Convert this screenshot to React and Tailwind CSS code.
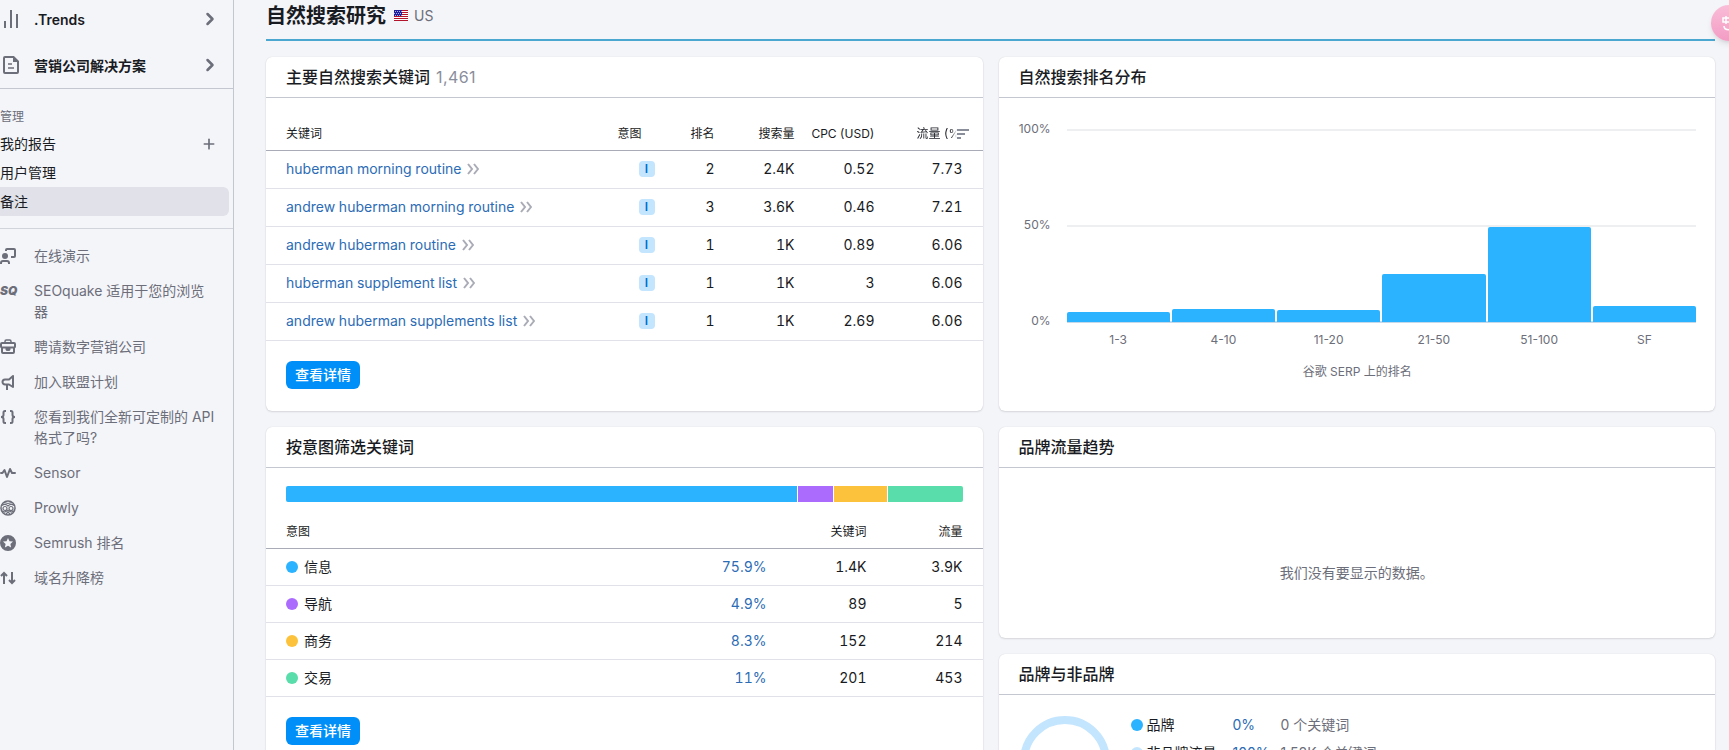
import React from "react";
import { ChevronRight, Plus } from "lucide-react";

const KEYWORDS = [
  { keyword: "huberman morning routine", rank: 2, volume: "2.4K", cpc: "0.52", traffic: "7.73" },
  { keyword: "andrew huberman morning routine", rank: 3, volume: "3.6K", cpc: "0.46", traffic: "7.21" },
  { keyword: "andrew huberman routine", rank: 1, volume: "1K", cpc: "0.89", traffic: "6.06" },
  { keyword: "huberman supplement list", rank: 1, volume: "1K", cpc: "3", traffic: "6.06" },
  { keyword: "andrew huberman supplements list", rank: 1, volume: "1K", cpc: "2.69", traffic: "6.06" },
];

const POSITIONS = [
  { range: "1-3", percent: 5 },
  { range: "4-10", percent: 6.7 },
  { range: "11-20", percent: 6.2 },
  { range: "21-50", percent: 25 },
  { range: "51-100", percent: 49.2 },
  { range: "SF", percent: 8.2 },
];

const INTENTS = [
  { name: "信息", percent: "75.9%", share: 76, keywords: "1.4K", traffic: "3.9K", color: "bg-[#2bb3ff]" },
  { name: "导航", percent: "4.9%", share: 5.1, keywords: "89", traffic: "5", color: "bg-[#ab6cfe]" },
  { name: "商务", percent: "8.3%", share: 7.9, keywords: "152", traffic: "214", color: "bg-[#fdc23c]" },
  { name: "交易", percent: "11%", share: 11.1, keywords: "201", traffic: "453", color: "bg-[#59ddaa]" },
];

const BRANDS = [
  { name: "品牌", percent: "0%", keywords: "0 个关键词", color: "bg-[#2bb3ff]" },
  { name: "非品牌流量", percent: "100%", keywords: "1.58K 个关键词", color: "bg-[#c4e5fe]" },
];

function Icon({ children }) {
  return (
    <svg
      viewBox="0 0 16 16"
      className="w-4 h-4 shrink-0"
      fill="none"
      stroke="currentColor"
      strokeWidth="2"
      aria-hidden="true"
    >
      {children}
    </svg>
  );
}

const LINKS = [
  {
    label: "在线演示",
    icon: (
      <Icon>
        <circle cx="5" cy="8" r="3" fill="currentColor" stroke="none" />
        <path d="M1 16v-1c0-1.200.8-2 2-2h4c1.200 0 2 .8 2 2v1" />
        <path d="M6 3V2c0-.6.4-1 1-1h7c.6 0 1 .4 1 1v6c0 .6-.4 1-1 1h-3" />
      </Icon>
    ),
  },
  {
    label: "SEOquake 适用于您的浏览器",
    icon: (
      <span className="w-4 shrink-0 text-xs leading-4 font-black italic" aria-hidden="true">
        SQ
      </span>
    ),
  },
  {
    label: "聘请数字营销公司",
    icon: (
      <Icon>
        <path d="M5 4V2.500C5 1.700 5.500 1 6.300 1h3.400c.8 0 1.300.7 1.300 1.500V4" strokeWidth="1.500" />
        <rect x="1" y="4" width="14" height="4.500" rx="1" />
        <path d="M2 8.500V13c0 .6.4 1 1 1h10c.6 0 1-.4 1-1V8.500" />
        <path d="M5.500 9h5v1.500a2.500 1.500 0 0 1-5 0z" fill="currentColor" stroke="none" />
      </Icon>
    ),
  },
  {
    label: "加入联盟计划",
    icon: (
      <Icon>
        <path d="M13 2v11L9 10.500H5a2.500 2.500 0 0 1 0-5h4z" strokeLinejoin="round" />
        <path d="M7 10.500V16" />
      </Icon>
    ),
  },
  {
    label: "您看到我们全新可定制的 API 格式了吗?",
    icon: (
      <Icon>
        <path d="M6 2H5C3.900 2 3.500 2.700 3.500 3.500V6c0 1-.8 2-2.500 2 1.700 0 2.500 1 2.500 2v2.500c0 .8.4 1.500 1.500 1.500h1" />
        <path d="M10 2h1c1.100 0 1.500.7 1.500 1.500V6c0 1 .8 2 2.500 2-1.700 0-2.500 1-2.500 2v2.500c0 .8-.4 1.500-1.500 1.500h-1" />
      </Icon>
    ),
  },
  {
    label: "Sensor",
    icon: (
      <Icon>
        <path d="M1 8h1.500L4.500 5 7 12l3-8 2 4h3" strokeLinecap="round" strokeLinejoin="round" />
      </Icon>
    ),
  },
  {
    label: "Prowly",
    icon: (
      <Icon>
        <circle cx="8" cy="8" r="7" strokeWidth="1.500" />
        <path d="M2 5.500C4.500 3.500 6 4 8 6c2-2 3.500-2.500 6-.5M4 2.500l4 1 4-1" strokeWidth="1.200" />
        <circle cx="5" cy="8.500" r="2" strokeWidth="1.200" />
        <circle cx="11" cy="8.500" r="2" strokeWidth="1.200" />
        <path d="M2 11l2.500 1L8 10.500l3.500 1.500 2.500-1M6 14l2-2 2 2" strokeWidth="1.200" />
      </Icon>
    ),
  },
  {
    label: "Semrush 排名",
    icon: (
      <Icon>
        <path
          fill="currentColor"
          stroke="none"
          fillRule="evenodd"
          d="M8 0a8 8 0 1 0 0 16A8 8 0 0 0 8 0zm0 3l1.500 3.200 3.500.4-2.600 2.400.7 3.500L8 10.800l-3.100 1.700.7-3.500L3 6.600l3.500-.4z"
        />
      </Icon>
    ),
  },
  {
    label: "域名升降榜",
    icon: (
      <Icon>
        <path d="M4 14V3M1 6l3-3 3 3M12 2v11M9 10l3 3 3-3" />
      </Icon>
    ),
  },
];

function Sidebar() {
  return (
    <aside className="w-[234px] shrink-0 border-r border-[#c4c7cf] text-sm leading-[21px] text-[#191b23]">
      <nav>
        <a href="#trends" className="flex items-center h-[38px] pl-[3px] pr-[13px] font-semibold">
          <svg viewBox="0 0 16 18" className="w-4 h-[18px] mr-[15px] text-[#6c6e79]" fill="currentColor" aria-hidden="true">
            <path d="M1 11h2v7H1zM7 0h2v18H7zM13 4h2v14h-2z" />
          </svg>
          <span className="flex-1">.Trends</span>
          <ChevronRight className="w-5 h-5 text-[#6c6e79]" strokeWidth={3} />
        </a>
        <a href="#agency" className="flex items-center h-[51px] pl-[3px] pr-[13px] pt-1 font-semibold border-b border-[#c4c7cf]">
          <svg viewBox="0 0 16 18" className="w-4 h-[18px] mr-[15px] text-[#6c6e79]" fill="none" stroke="currentColor" strokeWidth="2" aria-hidden="true">
            <path d="M2 1h8.500L15 5.500V16c0 .6-.4 1-1 1H2c-.6 0-1-.4-1-1V2c0-.6.4-1 1-1z" />
            <path d="M10 1v5h5z" fill="currentColor" stroke="none" />
            <path d="M5 8h4M5 12h6" strokeWidth="1.500" />
          </svg>
          <span className="flex-1">营销公司解决方案</span>
          <ChevronRight className="w-5 h-5 text-[#6c6e79]" strokeWidth={3} />
        </a>
      </nav>
      <nav className="pt-4 pb-3 border-b border-[#d1d4db]">
        <div className="h-6 text-xs leading-6 text-[#6c6e79]">管理</div>
        <div className="flex items-center justify-between h-[29px] pr-4">
          <a href="#reports">我的报告</a>
          <button type="button" aria-label="新建报告" className="text-[#6c6e79]">
            <Plus className="w-4 h-4" strokeWidth={2.5} />
          </button>
        </div>
        <a href="#users" className="flex items-center h-[29px]">
          用户管理
        </a>
        <a href="#notes" className="flex items-center h-[29px] mr-1 rounded-r-md bg-[#e0e1e9]">
          备注
        </a>
      </nav>
      <nav className="flex flex-col gap-3.5 pt-4 text-[#6c6e79]">
        {LINKS.map((link) => (
          <a key={link.label} href="#tools" className="flex gap-[18px] pr-4">
            <span className="flex items-center h-[21px] w-4 shrink-0">{link.icon}</span>
            <span>{link.label}</span>
          </a>
        ))}
      </nav>
    </aside>
  );
}

function Card({ title, count, className = "", children }) {
  return (
    <section
      className={`rounded-md bg-white shadow-[0_0_1px_0_rgba(25,27,35,0.16),0_1px_2px_0_rgba(25,27,35,0.12)] ${className}`}
    >
      <h2 className="h-[41px] px-5 border-b border-[#c4c7cf] text-base leading-10 font-medium text-[#191b23]">
        {title}
        {count && <span className="ml-1.5 font-normal tracking-wide text-[#8a8e9b]">{count}</span>}
      </h2>
      {children}
    </section>
  );
}

function DetailsButton() {
  return (
    <button type="button" className="block h-7 mt-5 ml-5 px-2 rounded-md bg-[#008ff8] text-sm font-medium text-white">
      <span className="px-px">查看详情</span>
    </button>
  );
}

function KeywordsTable() {
  return (
    <table className="w-full table-fixed text-right tabular-nums">
      <colgroup>
        <col />
        <col className="w-[37px]" />
        <col className="w-[60px]" />
        <col className="w-20" />
        <col className="w-20" />
        <col className="w-[108px]" />
      </colgroup>
      <thead className="text-xs">
        <tr className="h-[52px] border-b border-[#a9abb6] *:pt-5 *:font-normal">
          <th className="pl-5 text-left">关键词</th>
          <th className="text-left">意图</th>
          <th>排名</th>
          <th>搜索量</th>
          <th>CPC (USD)</th>
          <th className="pr-3.5">
            <button type="button" className="flex items-center ml-auto">
              <span className="w-10 overflow-hidden whitespace-nowrap text-left [mask-image:linear-gradient(to_right,#000_85%,transparent)]">
                流量 (%)
              </span>
              <svg viewBox="0 0 12 10" className="w-3 h-2.5 text-[#8a8e9b]" fill="currentColor" aria-hidden="true">
                <path d="M0 0h12v2H0zM0 4h8v2H0zM0 8h4v2H0z" />
              </svg>
            </button>
          </th>
        </tr>
      </thead>
      <tbody className="text-sm">
        {KEYWORDS.map((row) => (
          <tr key={row.keyword} className="h-[38px] border-b border-[#e0e1e9]">
            <td className="pl-5 text-left text-[#2c6cb5]">
              <a href="#keyword" className="flex items-center gap-1.5 whitespace-nowrap">
                {row.keyword}
                <svg viewBox="0 0 12 12" className="w-3 h-3 text-[#a9abb6]" fill="none" stroke="currentColor" strokeWidth="2" aria-hidden="true">
                  <path d="M1 1l4 5-4 5M7 1l4 5-4 5" />
                </svg>
              </a>
            </td>
            <td>
              <span className="flex items-center justify-center w-4 h-4 ml-auto rounded bg-[#c4e5fe] text-xs font-semibold text-[#006dca]">
                I
              </span>
            </td>
            <td>{row.rank}</td>
            <td>{row.volume}</td>
            <td>{row.cpc}</td>
            <td className="pr-5">{row.traffic}</td>
          </tr>
        ))}
      </tbody>
    </table>
  );
}

function PositionsChart() {
  return (
    <div className="pl-5 pr-[19px] pt-[31px] text-xs text-[#6c6e79]">
      <div className="flex">
        <div className="flex flex-col justify-between w-8 mr-4 -my-2 h-52 text-right leading-4">
          <span>100%</span>
          <span>50%</span>
          <span>0%</span>
        </div>
        <div className="relative flex-1 h-[194px]">
          <div className="flex flex-col justify-between h-full">
            <div className="h-0.5 bg-[#edeff0]" />
            <div className="h-0.5 bg-[#edeff0]" />
            <div className="h-0.5 bg-[#c4d8ea]" />
          </div>
          <div className="absolute inset-x-0 top-0 bottom-px flex items-end gap-0.5">
            {POSITIONS.map((p) => (
              <div key={p.range} className="flex-1 rounded-t-xs bg-[#2bb3ff]" style={{ height: `${p.percent}%` }} />
            ))}
          </div>
        </div>
      </div>
      <div className="flex gap-0.5 ml-12 mt-[7px] text-center leading-5">
        {POSITIONS.map((p) => (
          <span key={p.range} className="flex-1">
            {p.range}
          </span>
        ))}
      </div>
      <div className="mt-3 text-center leading-5">谷歌 SERP 上的排名</div>
    </div>
  );
}

function IntentTable() {
  return (
    <>
      <div className="flex gap-px mx-5 mt-[18px] h-4 rounded-xs overflow-hidden">
        {INTENTS.map((intent) => (
          <div key={intent.name} className={intent.color} style={{ flex: intent.share }} />
        ))}
      </div>
      <table className="w-full table-fixed text-right tabular-nums">
        <colgroup>
          <col />
          <col className="w-[100px]" />
          <col className="w-[100px]" />
          <col className="w-[116px]" />
        </colgroup>
        <thead className="text-xs">
          <tr className="h-[47px] border-b border-[#a9abb6] *:pt-3.5 *:font-normal">
            <th className="pl-5 text-left">意图</th>
            <th aria-label="百分比" />
            <th>关键词</th>
            <th className="pr-5">流量</th>
          </tr>
        </thead>
        <tbody className="text-sm">
          {INTENTS.map((intent) => (
            <tr key={intent.name} className="h-[37px] border-b border-[#e0e1e9]">
              <td className="pl-5">
                <span className="flex items-center gap-1.5">
                  <span className={`w-3 h-3 rounded-full ${intent.color}`} />
                  {intent.name}
                </span>
              </td>
              <td>
                <a href="#intent" className="text-[#2c6cb5]">
                  {intent.percent}
                </a>
              </td>
              <td>{intent.keywords}</td>
              <td className="pr-5">{intent.traffic}</td>
            </tr>
          ))}
        </tbody>
      </table>
    </>
  );
}

function BrandSplit() {
  return (
    <div className="flex gap-5 pl-5 pt-5 text-sm">
      <svg viewBox="0 0 92 92" className="w-[92px] h-[92px]" fill="none" aria-hidden="true">
        <circle cx="46" cy="46" r="41" stroke="#c4e5fe" strokeWidth="8" />
      </svg>
      <table className="self-start">
        <tbody>
          {BRANDS.map((brand) => (
            <tr key={brand.name} className="h-7 *:p-0 *:align-top *:leading-5">
              <td className="w-[102px]">
                <span className="flex items-center gap-1">
                  <span className={`w-3 h-3 rounded-full ${brand.color}`} />
                  {brand.name}
                </span>
              </td>
              <td className="w-12 text-[#2c6cb5]">{brand.percent}</td>
              <td className="text-[#6c6e79]">{brand.keywords}</td>
            </tr>
          ))}
        </tbody>
      </table>
    </div>
  );
}

function UsFlag() {
  return (
    <svg viewBox="0 0 14 11" className="w-3.5 h-[11px]" aria-hidden="true">
      <path fill="#fff" d="M0 0h14v11H0z" />
      <path fill="#b3142c" d="M0 0h14v1H0zM0 2h14v1H0zM0 4h14v1H0zM0 6h14v1H0zM0 8h14v1H0zM0 10h14v1H0z" />
      <path fill="#1f1f9c" d="M0 0h8v6H0z" />
      <path stroke="#aab0e6" strokeWidth="1" strokeDasharray="1 1" d="M1 1.500h7M0 3.500h7M1 5.500h7" />
    </svg>
  );
}

function App() {
  return (
    <div className="flex h-screen overflow-hidden bg-[#f4f5f9] text-[#191b23] font-[Inter,'Noto_Sans_CJK_SC',sans-serif]">
      <Sidebar />
      <main className="flex-1 pl-8 pr-3.5">
        <header className="flex items-center gap-2 h-[41px] pb-2 border-b-2 border-[#4ba7d0]">
          <h1 className="text-xl leading-7 font-bold">自然搜索研究</h1>
          <UsFlag />
          <span className="-ml-0.5 text-sm text-[#6c6e79]">US</span>
        </header>
        <div className="grid grid-cols-2 gap-4 mt-4">
          <div className="flex flex-col gap-4">
            <Card title="主要自然搜索关键词" count="1,461" className="pb-[22px]">
              <KeywordsTable />
              <DetailsButton />
            </Card>
            <Card title="按意图筛选关键词" className="pb-[22px]">
              <IntentTable />
              <DetailsButton />
            </Card>
          </div>
          <div className="flex flex-col gap-4">
            <Card title="自然搜索排名分布" className="pb-[29px]">
              <PositionsChart />
            </Card>
            <Card title="品牌流量趋势">
              <p className="pt-[94px] pb-[55px] text-center text-sm leading-[21px] text-[#6c6e79]">
                我们没有要显示的数据。
              </p>
            </Card>
            <Card title="品牌与非品牌" className="pb-[22px]">
              <BrandSplit />
            </Card>
          </div>
        </div>
      </main>
      <button
        type="button"
        aria-label="助手"
        className="fixed top-[5px] -right-[18px] flex items-center justify-center w-9 h-9 rounded-full bg-linear-to-b from-[#f9bdd8] to-[#f39cc4] text-white shadow-md"
      >
        <svg viewBox="0 0 16 16" className="w-4 h-4" fill="none" stroke="currentColor" strokeWidth="1.500" aria-hidden="true">
          <path d="M2 3h12v4H2zM5 1v8M11 1v8M3 11c0 5 10 5 10 0" />
        </svg>
      </button>
    </div>
  );
}

export default App;
